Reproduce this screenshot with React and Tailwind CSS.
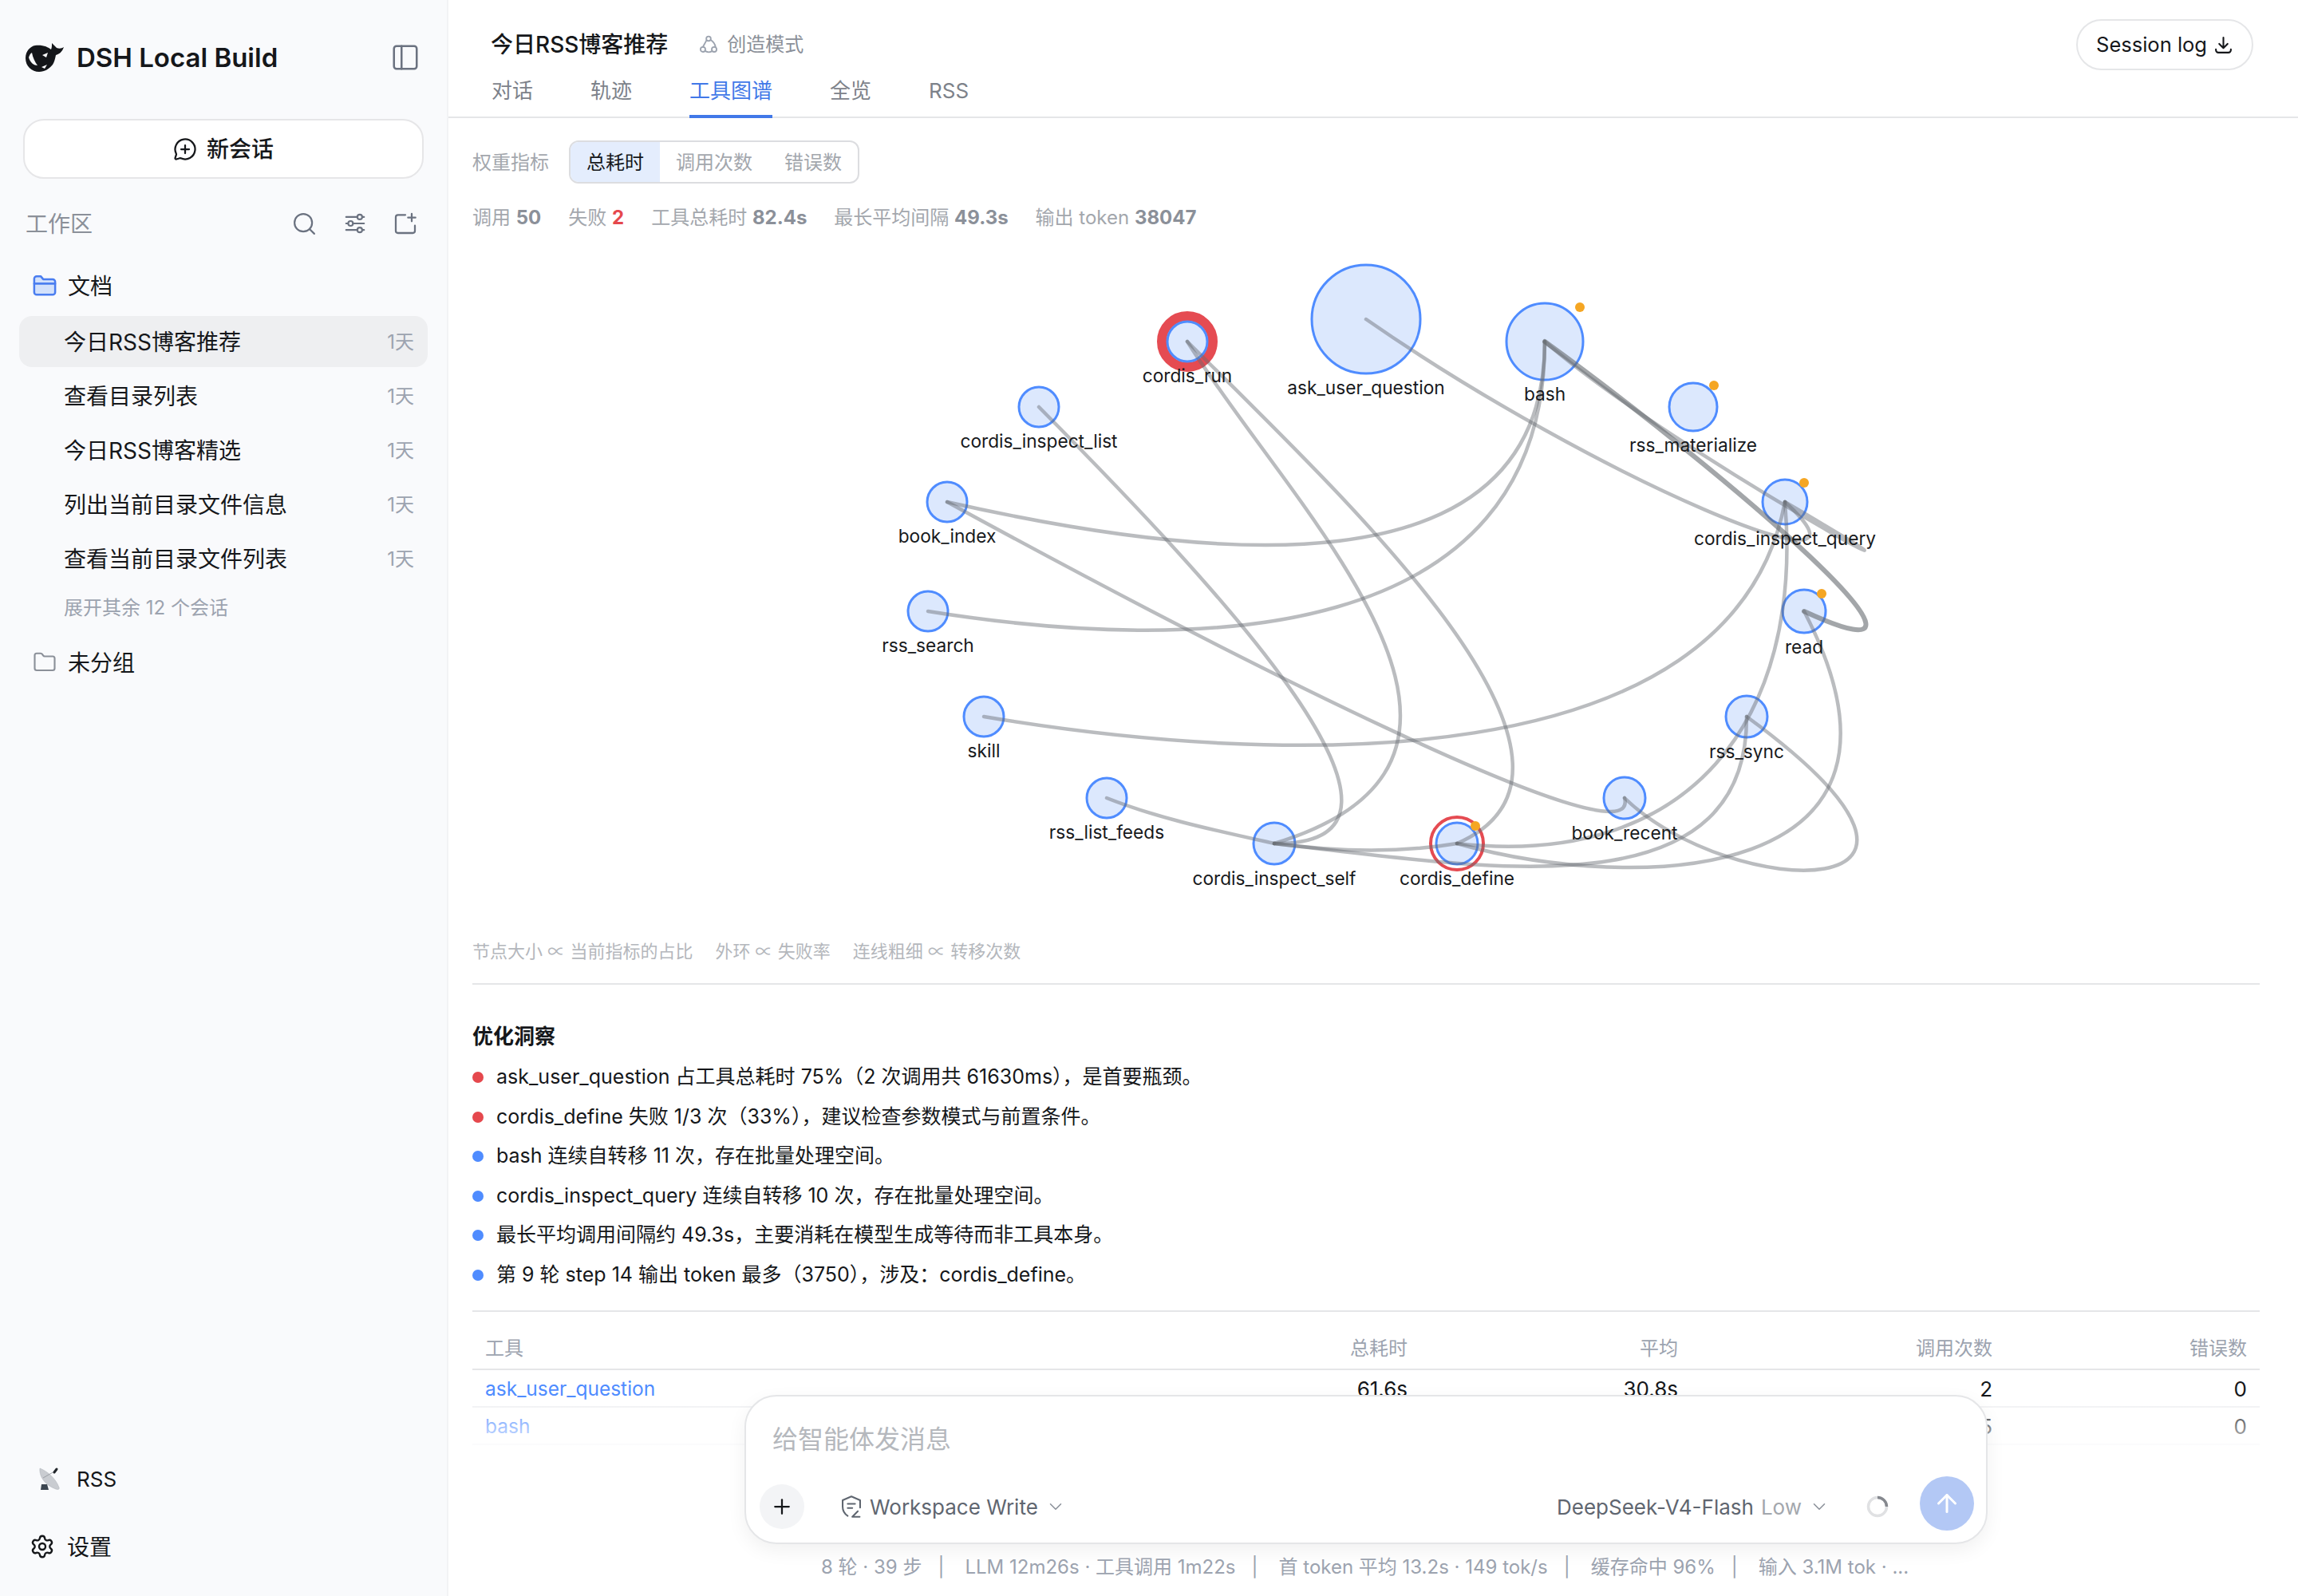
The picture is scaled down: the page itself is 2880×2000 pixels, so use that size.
import React from 'react';
import { ChevronDown, ArrowUp, Plus, Search, PanelLeft, MessageCirclePlus, Folder, Settings } from 'lucide-react';

const font = { fontFamily: 'Inter, "Noto Sans CJK SC", sans-serif' };

const sessions = ['今日RSS博客推荐', '查看目录列表', '今日RSS博客精选', '列出当前目录文件信息', '查看当前目录文件列表'];

const nodes = [
  { name: 'cordis_run', x: 1488, y: 428, r: 25, ring: 'thick' },
  { name: 'ask_user_question', x: 1712, y: 400, r: 68 },
  { name: 'bash', x: 1936, y: 428, r: 48, dot: [1980, 385] },
  { name: 'rss_materialize', x: 2122, y: 510, r: 30, dot: [2148, 483] },
  { name: 'cordis_inspect_query', x: 2237, y: 629, r: 28, dot: [2261, 605] },
  { name: 'read', x: 2261, y: 766, r: 27, dot: [2283, 744] },
  { name: 'rss_sync', x: 2189, y: 898, r: 26 },
  { name: 'book_recent', x: 2036, y: 1000, r: 26 },
  { name: 'cordis_define', x: 1826, y: 1057, r: 26, ring: 'thin', dot: [1849, 1035] },
  { name: 'cordis_inspect_self', x: 1597, y: 1057, r: 26 },
  { name: 'rss_list_feeds', x: 1387, y: 1000, r: 25 },
  { name: 'skill', x: 1233, y: 898, r: 25 },
  { name: 'rss_search', x: 1163, y: 766, r: 25 },
  { name: 'book_index', x: 1187, y: 629, r: 25 },
  { name: 'cordis_inspect_list', x: 1302, y: 510, r: 25 },
];

const edges = [
  { d: 'M1187,629 C1500,700 1936,755 1936,428' },
  { d: 'M1163,766 C1500,820 1936,810 1936,428' },
  { d: 'M1187,629 C1500,800 2060,1090 2036,1000' },
  { d: 'M1302,510 C1530,740 1830,1060 1597,1057' },
  { d: 'M1488,428 C1620,640 1950,950 1597,1057' },
  { d: 'M1488,428 C1680,620 2050,960 1826,1057' },
  { d: 'M1387,1000 C1450,1025 1520,1040 1597,1057' },
  { d: 'M1597,1057 C1680,1068 1760,1068 1826,1057' },
  { d: 'M1597,1057 C1850,1085 2190,1150 2189,898' },
  { d: 'M1826,1057 C2050,1120 2440,1110 2261,766' },
  { d: 'M2237,629 C2260,900 2120,1090 1826,1057' },
  { d: 'M2036,1000 C2170,1130 2520,1140 2189,898' },
  { d: 'M1233,898 C1600,960 2170,980 2237,629' },
  { d: 'M1712,400 C2000,600 2380,760 2237,629' },
  { d: 'M1936,428 C2100,570 2530,800 2237,629' },
  { d: 'M1936,428 C2160,590 2490,872 2261,766', thick: true },
];

const insights = [
  ['red', 'ask_user_question 占工具总耗时 75%（2 次调用共 61630ms），是首要瓶颈。'],
  ['red', 'cordis_define 失败 1/3 次（33%），建议检查参数模式与前置条件。'],
  ['blue', 'bash 连续自转移 11 次，存在批量处理空间。'],
  ['blue', 'cordis_inspect_query 连续自转移 10 次，存在批量处理空间。'],
  ['blue', '最长平均调用间隔约 49.3s，主要消耗在模型生成等待而非工具本身。'],
  ['blue', '第 9 轮 step 14 输出 token 最多（3750），涉及：cordis_define。'],
];

const footerItems = ['8 轮 · 39 步', 'LLM 12m26s · 工具调用 1m22s', '首 token 平均 13.2s · 149 tok/s', '缓存命中 96%', '输入 3.1M tok · ...'];

function Logo() {
  return (
    <svg width="50" height="36" viewBox="0 0 48 36" className="shrink-0">
      <path fill="#14161a" d="M12 3C6 4 0 10 0 19c0 10 8 17 17 17 7 0 13-4 17-9 2-3 3-7 4-12 4-1 8-4 10-10-3 2-6 2-9 1-2-2-4-4-6-6 0 3 0 6-1 8C28 5 22 2 12 3Z" />
      <path fill="#f9fafc" d="M4 18c2 7 7 10 11 10-3-4-6-10-7-16-2 1-3 3-4 6ZM21 15l7-3-2 6-5-3ZM20 30l7-3-3 5-4-2Z" />
    </svg>
  );
}

function SlidersIcon() {
  return (
    <svg width="30" height="30" viewBox="0 0 24 24" fill="none" stroke="#6b7280" strokeWidth="1.7" strokeLinecap="round">
      <path d="M3 5.5h11M19.5 5.5H21M3 12h2M10 12h11M3 18.5h11M19.5 18.5H21" />
      <circle cx="16.7" cy="5.5" r="2.4" />
      <circle cx="7.5" cy="12" r="2.4" />
      <circle cx="16.7" cy="18.5" r="2.4" />
    </svg>
  );
}

function FolderPlusIcon() {
  return (
    <svg width="32" height="32" viewBox="0 0 24 24" fill="none" stroke="#6b7280" strokeWidth="1.7" strokeLinecap="round" strokeLinejoin="round">
      <path d="M12 4H5a2 2 0 0 0-2 2v13a2 2 0 0 0 2 2h14a2 2 0 0 0 2-2v-5" />
      <path d="M18 3v7M14.5 6.5h7" />
    </svg>
  );
}

function FolderOpenIcon() {
  return (
    <svg width="30" height="28" viewBox="0 0 24 22" fill="none" stroke="#4a7df0" strokeWidth="2" strokeLinejoin="round">
      <path fill="#d3e1fb" d="M1.5 9V4a2.5 2.5 0 0 1 2.5-2.5h4l2.5 3H20A2.5 2.5 0 0 1 22.500 7v2Z" />
      <path fill="#d3e1fb" d="M1.500 9h21v8.500A2.500 2.500 0 0 1 20 20H4a2.500 2.500 0 0 1-2.500-2.500Z" />
    </svg>
  );
}

function DishIcon() {
  return (
    <svg width="28" height="30" viewBox="0 0 28 30">
      <path fill="#c9ccd1" stroke="#a9adb3" strokeWidth="0.5" d="M2 2c-1 8 4 20 20 26 3 1 5 0 4-2C22 15 12 6 2 2Z" />
      <path stroke="#8f9399" strokeWidth="0.8" d="M6 14L20 6" />
      <path stroke="#22262b" strokeWidth="3" strokeLinecap="round" d="M20 7l3-4" />
      <path fill="#3c4650" d="M4 22h7l2 7H3Z" />
    </svg>
  );
}

function ModeIcon() {
  return (
    <svg width="26" height="26" viewBox="0 0 24 24" fill="none" stroke="#9ca3af" strokeWidth="1.7" strokeLinecap="round">
      <circle cx="12" cy="5" r="2.600" />
      <circle cx="5.500" cy="17.500" r="2.800" />
      <circle cx="18.500" cy="17.500" r="2.800" />
      <path d="M9.600 7 5.500 14.500M14.500 6.500c3 2 5 4.500 5.500 8M8.500 19.500c2.500 1.500 5 1.500 7.500 0" />
    </svg>
  );
}

function ShieldIcon() {
  return (
    <svg width="28" height="30" viewBox="0 0 24 26" fill="none" stroke="#5f6670" strokeWidth="1.800" strokeLinecap="round" strokeLinejoin="round">
      <path d="M8 23C4 20.500 2.500 17.500 2.500 13V6L12 2l9.500 4v8" />
      <path d="M8 10h8M8 14.500h5" />
      <path d="M13 24l6-6M14 24h7" />
    </svg>
  );
}

function Graph() {
  return (
    <svg width="2240" height="870" viewBox="592 305 2240 870" className="block" style={font}>
      {nodes.map((n) => (
        <g key={n.name}>
          {n.ring === 'thick' && <circle cx={n.x} cy={n.y} r={32} fill="none" stroke="#e54b52" strokeWidth="12" />}
          {n.ring === 'thin' && <circle cx={n.x} cy={n.y} r={33} fill="none" stroke="#e54b52" strokeWidth="4" />}
          <circle cx={n.x} cy={n.y} r={n.r} fill="#dce8fd" stroke="#4f8cff" strokeWidth="3" />
        </g>
      ))}
      {edges.map((e, i) => (
        <path key={i} d={e.d} fill="none" stroke="#666a70" strokeOpacity={e.thick ? 0.6 : 0.45} strokeWidth={e.thick ? 6 : 4.5} strokeLinecap="round" />
      ))}
      {nodes.map((n) => n.dot && <circle key={n.name} cx={n.dot[0]} cy={n.dot[1]} r="6" fill="#f5a623" />)}
      {nodes.map((n) => (
        <text key={n.name} x={n.x} y={n.y + n.r + 26} textAnchor="middle" fontSize="22.7" fill="#17191c">{n.name}</text>
      ))}
    </svg>
  );
}

export default function App() {
  return (
    <div className="flex h-[2000px] w-full overflow-hidden bg-white text-[#15171a]" style={font}>
      {/* sidebar */}
      <aside className="flex w-[562px] shrink-0 flex-col border-r-2 border-[#f2f3f5] bg-[#f9fafc]">
        <div className="mt-[52px] flex h-[40px] items-center pl-[31px] pr-[33px]">
          <Logo />
          <span className="ml-[15px] text-[33px] leading-none font-semibold">DSH Local Build</span>
          <PanelLeft className="ml-auto text-[#6b7280]" size={38} strokeWidth={1.600} />
        </div>
        <button className="mx-[29px] mt-[57px] flex h-[75px] items-center justify-center gap-[12px] rounded-[26px] border-2 border-[#e6e6e8] bg-white text-[28px] font-medium">
          <MessageCirclePlus size={30} strokeWidth={1.800} />
          新会话
        </button>
        <div className="mt-[36px] flex h-[40px] items-center pl-[32px] pr-[36px] text-[#8b9099]">
          <span className="pt-[2px] text-[28px]">工作区</span>
          <Search className="ml-auto mr-[32px]" size={33} strokeWidth={1.600} color="#6b7280" />
          <SlidersIcon />
          <span className="ml-[32px]"><FolderPlusIcon /></span>
        </div>
        <div className="mt-[38px] flex h-[40px] items-center gap-[14px] pl-[41px] text-[28px]">
          <FolderOpenIcon />
          <span className="pt-[2px]">文档</span>
        </div>
        <div className="mx-[24px] mt-[18px] flex flex-col gap-[4px]">
          {sessions.map((s, i) => (
            <div key={s} className={`flex h-[64px] items-center justify-between rounded-[16px] pl-[56px] pr-[17px] text-[28px] ${i === 0 ? 'bg-[#eeeff1]' : ''}`}>
              <span className="pt-[2px]">{s}</span>
              <span className="pt-[2px] text-[24px] text-[#9ca3af]">1天</span>
            </div>
          ))}
        </div>
        <div className="mt-[14px] pl-[80px] text-[24px] leading-[32px] text-[#9ca3af]">展开其余 12 个会话</div>
        <div className="mt-[32px] flex h-[40px] items-center gap-[14px] pl-[41px] text-[28px]">
          <Folder size={30} strokeWidth={1.700} color="#8b9099" />
          <span className="pt-[2px]">未分组</span>
        </div>
        <div className="mt-auto mb-[42px] flex flex-col gap-[45px]">
          <div className="flex h-[40px] items-center gap-[20px] pl-[48px] text-[26px]">
            <DishIcon />
            RSS
          </div>
          <div className="flex h-[40px] items-center gap-[15px] pl-[37px] text-[28px]">
            <Settings size={32} strokeWidth={1.800} />
            <span className="pt-[2px]">设置</span>
          </div>
        </div>
      </aside>

      {/* main */}
      <main className="relative min-w-0 flex-1 overflow-hidden">
        <header className="flex h-[148px] items-start justify-between border-b-2 border-[#e5e6e8] pl-[53px] pr-[56px]">
          <div>
            <div className="mt-[36px] flex h-[40px] items-center">
              <span className="text-[28px] font-medium">今日RSS博客推荐</span>
              <span className="ml-[38px] flex items-center gap-[10px] text-[24px] text-[#8b9099]"><ModeIcon />创造模式</span>
            </div>
            <div className="mt-[16px] ml-[1px] flex gap-[72px] text-[26px] text-[#7d828a]">
              <span className="h-[56px] pt-[2px]">对话</span>
              <span className="h-[56px] pt-[2px]">轨迹</span>
              <span className="h-[56px] border-b-4 border-[#4178e8] pt-[2px] text-[#4178e8]">工具图谱</span>
              <span className="h-[56px] pt-[2px]">全览</span>
              <span className="h-[56px] pt-[2px]">RSS</span>
            </div>
          </div>
          <button className="mt-[24px] flex h-[64px] items-center gap-[8px] rounded-full border-2 border-[#e5e6e8] px-[23px] text-[25.5px]">
            Session log
            <svg width="25" height="25" viewBox="0 0 24 24" fill="none" stroke="currentColor" strokeWidth="2" strokeLinecap="round" strokeLinejoin="round">
              <path d="M12 3v12M7 10.500l5 5 5-5M3 17v1a3 3 0 0 0 3 3h12a3 3 0 0 0 3-3v-1" />
            </svg>
          </button>
        </header>

        <div className="pl-[30px] pr-[48px]">
          <div className="mt-[28px] flex items-center gap-[25px] text-[24px] text-[#a3a7ad]">
            <span className="pt-[2px]">权重指标</span>
            <div className="flex h-[54px] overflow-hidden rounded-[12px] border-2 border-[#dcdde0]">
              <span className="flex items-center bg-[#e4edfd] px-[20px] pt-[2px] text-[#15171a]">总耗时</span>
              <span className="flex items-center px-[20px] pt-[2px]">调用次数</span>
              <span className="flex items-center px-[20px] pt-[2px]">错误数</span>
            </div>
          </div>

          <div className="mt-[27px] flex h-[32px] items-center gap-[34px] text-[24px] text-[#a3a7ad]">
            <span>调用 <b className="font-bold text-[#8b9099]">50</b></span>
            <span>失败 <b className="font-bold text-[#e5484d]">2</b></span>
            <span>工具总耗时 <b className="font-bold text-[#8b9099]">82.4s</b></span>
            <span>最长平均间隔 <b className="font-bold text-[#8b9099]">49.3s</b></span>
            <span>输出 token <b className="font-bold text-[#8b9099]">38047</b></span>
          </div>

          <div className="mt-[16px]"><Graph /></div>

          <div className="mt-[2px] flex h-[30px] items-center gap-[28px] text-[22px] text-[#b4b7bc]">
            <span>节点大小 ∝ 当前指标的占比</span>
            <span>外环 ∝ 失败率</span>
            <span>连线粗细 ∝ 转移次数</span>
          </div>
          <div className="mt-[25px] border-t-2 border-[#e5e6e8]" />

          <h3 className="mt-[47px] text-[26px] leading-[36px] font-semibold">优化洞察</h3>
          <ul className="mt-[15px] flex flex-col gap-[13.500px]">
            {insights.map(([tone, text]) => (
              <li key={text} className="flex h-[36px] items-center gap-[16px] text-[25px]">
                <span className={`size-[14px] shrink-0 rounded-full ${tone === 'red' ? 'bg-[#e5484d]' : 'bg-[#4f8cff]'}`} />
                {text}
              </li>
            ))}
          </ul>
          <div className="mt-[26px] border-t-2 border-[#e5e6e8]" />

          <div className="mt-[30px] grid h-[43px] grid-cols-[800px_388px_339px_394px_319px] border-b-2 border-[#e5e6e8] text-[24px] leading-[32px] text-[#9ca3af]">
            <span className="pl-[16px]">工具</span>
            <span className="pr-[16px] text-right">总耗时</span>
            <span className="pr-[16px] text-right">平均</span>
            <span className="pr-[16px] text-right">调用次数</span>
            <span className="pr-[16px] text-right">错误数</span>
          </div>
          {[
            ['ask_user_question', '61.6s', '30.8s', '2', '0'],
            ['bash', '4.9s', '0.3s', '15', '0'],
          ].map((row) => (
            <div key={row[0]} className="grid h-[47px] grid-cols-[800px_388px_339px_394px_319px] items-center border-b-2 border-[#f0f1f3] pt-[2px] text-[26px]">
              <span className="pl-[16px] text-[24.5px] text-[#4f8cff]">{row[0]}</span>
              <span className="pr-[16px] text-right">{row[1]}</span>
              <span className="pr-[16px] text-right">{row[2]}</span>
              <span className="pr-[16px] text-right">{row[3]}</span>
              <span className="pr-[16px] text-right">{row[4]}</span>
            </div>
          ))}
        </div>

        <div className="pointer-events-none absolute inset-x-0 bottom-0 h-[250px] bg-linear-to-t from-white from-[68%] to-transparent" />
        <div className="absolute bottom-[65px] left-[371px] flex h-[187px] w-[1558px] flex-col rounded-[40px] border-2 border-[#e5e6e8] bg-white shadow-[0_8px_24px_rgba(0,0,0,0.06)]">
          <div className="mt-[34px] pl-[33px] text-[32px] leading-[40px] text-[#b5b8bd]">给智能体发消息</div>
          <div className="mt-auto mb-[7px] flex items-center pl-[17px] pr-[15px]">
            <span className="flex size-[56px] items-center justify-center rounded-full bg-[#f3f4f6]"><Plus size={30} strokeWidth={1.800} /></span>
            <span className="ml-[45px] flex items-center gap-[9px] text-[26px] text-[#5f6670]">
              <ShieldIcon />
              Workspace Write
              <ChevronDown size={26} strokeWidth={1.400} color="#8b9099" />
            </span>
            <span className="ml-auto flex items-center text-[26px] text-[#5f6670]">
              DeepSeek-V4-Flash
              <span className="ml-[9px] text-[#a3a7ad]">Low</span>
              <ChevronDown className="ml-[9px]" size={26} strokeWidth={1.400} color="#8b9099" />
            </span>
            <svg className="ml-[46px]" width="28" height="28" viewBox="0 0 28 28" fill="none" strokeWidth="3.500">
              <circle cx="14" cy="14" r="11.500" stroke="#e0e1e3" />
              <path d="M14 2.500A11.500 11.500 0 0 1 25.500 14" stroke="#85888e" />
            </svg>
            <span className="mb-[8px] ml-[39px] flex size-[68px] items-center justify-center rounded-full bg-[#b3c8f5]"><ArrowUp size={36} strokeWidth={2} color="#fff" /></span>
          </div>
        </div>
        <div className="absolute bottom-[20px] left-[467px] flex whitespace-pre text-[24px] leading-[32px] text-[#9ca3af]">
          {footerItems.map((item, i) => (
            <span key={item} className="flex">
              {i > 0 && <span className="ml-[20px] mr-[26px]">|</span>}
              {item}
            </span>
          ))}
        </div>
      </main>
    </div>
  );
}
